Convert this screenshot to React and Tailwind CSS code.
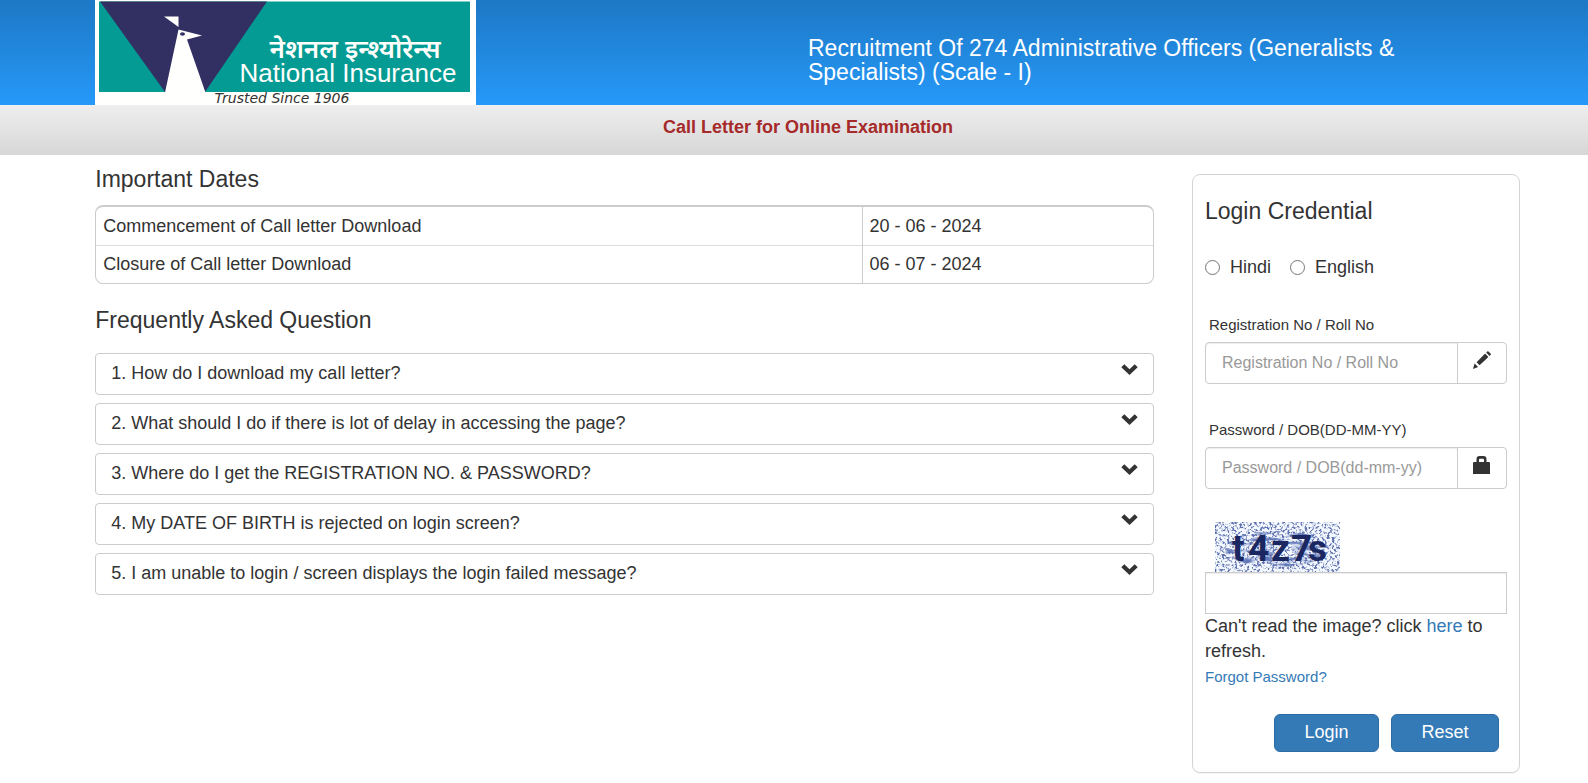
import { useState } from 'react';

const dates = [
    { label: 'Commencement of Call letter Download', value: '20 - 06 - 2024' },
    { label: 'Closure of Call letter Download', value: '06 - 07 - 2024' },
];

const questions = [
    '1. How do I download my call letter?',
    '2. What should I do if there is lot of delay in accessing the page?',
    '3. Where do I get the REGISTRATION NO. & PASSWORD?',
    '4. My DATE OF BIRTH is rejected on login screen?',
    '5. I am unable to login / screen displays the login failed message?',
];

const Logo = () => (
    <svg className="block w-full" viewBox="0 0 381 105" role="img" aria-label="National Insurance">
        <rect width="381" height="105" fill="#fffffd" />
        <rect x="4" y="1.5" width="371" height="90.5" fill="#039b93" />
        <path d="M5 1.5H172L110 92H70Z" fill="#322f63" />
        {/* Bird */}
        <path d="M70 92.5L83.5 29.5L107 35.5L92 39.5L110.500 92.500Z" fill="#fffffd" />
        <path d="M69 16.500H83.500V27Z" fill="#fffffd" />
        <ellipse cx="87.500" cy="34" rx="2.500" ry="1.800" fill="#322f63" />
        <g fontFamily="'Liberation Sans', 'Noto Sans Devanagari', sans-serif" fill="#fffffd">
            <text x="260" y="58" fontSize="26" fontWeight="600" textAnchor="middle">नेशनल इन्श्योरेन्स</text>
            <text x="253" y="82" fontSize="26" textAnchor="middle">National Insurance</text>
        </g>
        <text x="187" y="103" fontSize="14" fontStyle="italic" fontFamily="'DejaVu Sans', sans-serif" fill="#333333" textAnchor="middle">
            Trusted Since 1906
        </text>
    </svg>
);

const ChevronIcon = () => (
    <svg className="h-[11px] w-[17px]" viewBox="0 0 17 11" fill="currentColor" aria-hidden="true">
        <path d="M0.300 3.200L3.300 0.300L8.500 5.200L13.700 0.300L16.700 3.200L8.500 11Z" />
    </svg>
);

const PencilIcon = () => (
    <svg className="h-[18px] w-[18px]" viewBox="0 0 18 18" fill="currentColor" aria-hidden="true">
        <path d="M14.200 0.500Q14.900 0 15.500 0.600L17.500 2.600Q18.200 3.300 17.600 3.900L16.500 4.900L13.200 1.600ZM12.100 2.600L15.400 5.900L6.600 14.300L3.600 11.200ZM1.600 12.500L5.100 15.900L0 18Z" />
    </svg>
);

const LockIcon = () => (
    <svg className="h-[18px] w-[18px]" viewBox="0 0 18 18" fill="currentColor" aria-hidden="true">
        <path fillRule="evenodd" d="M3.500 6V3Q3.500 0 6.500 0H10.500Q13.500 0 13.500 3V6H16Q17 6 17 7V18H0V7Q0 6 1 6ZM6 6H11V3.700Q11 2.700 10 2.700H7Q6 2.700 6 3.700Z" />
    </svg>
);

const Captcha = () => (
    <svg className="ml-[10px] block h-[50px] w-[125px]" viewBox="0 0 125 50" role="img" aria-label="Captcha">
        <defs>
            <filter id="speckle" x="0" y="0" width="100%" height="100%" colorInterpolationFilters="sRGB">
                <feTurbulence type="fractalNoise" baseFrequency="0.4" numOctaves="2" seed="7" />
                <feColorMatrix values="0 0 0 0 0.36  0 0 0 0 0.43  0 0 0 0 0.68  5 0 0 0 -2.400" />
            </filter>
            <filter id="smear" x="0" y="0" width="100%" height="100%" colorInterpolationFilters="sRGB">
                <feTurbulence type="fractalNoise" baseFrequency="0.05 0.25" numOctaves="3" seed="4" result="noise" />
                <feColorMatrix in="noise" values="0 0 0 0 0.38  0 0 0 0 0.47  0 0 0 0 0.72  3 0 0 0 -1.300" />
                <feComposite in2="SourceGraphic" operator="in" />
            </filter>
        </defs>
        <rect width="125" height="50" fill="#f4f9ff" />
        <rect width="125" height="50" filter="url(#speckle)" />
        <ellipse cx="62" cy="27" rx="52" ry="18" filter="url(#smear)" />
        <text x="17 33 56 76 93" y="39" fontSize="37" fontWeight="700" fontFamily="Roboto, sans-serif" fill="#1b2760">
            t4z7s
        </text>
    </svg>
);

const Field = ({ id, label, placeholder, type, icon }) => (
    <div>
        <label htmlFor={id} className="ml-1 block text-[15px] leading-[21px]">{label}</label>
        <div className="mt-[7px] flex h-[42px] rounded border border-[#cccccc]">
            <input
                id={id}
                type={type}
                placeholder={placeholder}
                className="min-w-0 flex-1 rounded-l px-4 text-[16px] shadow-[inset_0_1px_1px_rgba(0,0,0,0.075)] outline-none placeholder:text-[#999999]"
            />
            <span className="flex w-[49px] justify-center border-l border-[#cccccc] pt-2">{icon}</span>
        </div>
    </div>
);

const LoginCard = () => (
    <form
        onSubmit={(e) => e.preventDefault()}
        className="mt-[19px] rounded-lg border border-[#d3d3d3] px-3 pt-[22px] pb-5 shadow-[0_1px_1px_rgba(0,0,0,0.05)]"
    >
        <h2 className="text-[23px] leading-[28px]">Login Credential</h2>

        <div className="mt-7 flex items-center gap-[19px] text-[18px] leading-[28px]">
            <label className="flex items-center gap-[10px]">
                <input type="radio" name="language" className="h-[15px] w-[15px]" />
                Hindi
            </label>
            <label className="flex items-center gap-[10px]">
                <input type="radio" name="language" className="h-[15px] w-[15px]" />
                English
            </label>
        </div>

        <div className="mt-[33px] flex flex-col gap-[35px]">
            <Field id="regno" type="text" label="Registration No / Roll No" placeholder="Registration No / Roll No" icon={<PencilIcon />} />
            <Field id="password" type="password" label="Password / DOB(DD-MM-YY)" placeholder="Password / DOB(dd-mm-yy)" icon={<LockIcon />} />
        </div>

        <div className="mt-[33px]">
            <Captcha />
            <input
                type="text"
                aria-label="Captcha text"
                className="block h-[42px] w-full border border-[#cccccc] px-4 text-[16px] shadow-[inset_0_1px_1px_rgba(0,0,0,0.075)] outline-none"
            />
        </div>
        <p className="text-[18px] leading-[25px]">
            Can't read the image? click <a href="#refresh" className="text-[#337ab7]">here</a> to refresh.
        </p>
        <a href="#forgot" className="block text-[15px] leading-[25px] text-[#337ab7]">Forgot Password?</a>

        <div className="mt-[25px] flex justify-end gap-3 pr-2 text-[18px] text-white">
            <button type="submit" className="h-[38px] w-[105px] rounded-md border border-[#2e6da4] bg-[#337ab7] pb-[2px]">Login</button>
            <button type="reset" className="h-[38px] w-[108px] rounded-md border border-[#2e6da4] bg-[#337ab7] pb-[2px]">Reset</button>
        </div>
    </form>
);

const Faq = () => {
    const [open, setOpen] = useState(null);

    return (
        <div className="mt-[19px] flex flex-col gap-2">
            {questions.map((question, i) => (
                <button
                    key={question}
                    type="button"
                    aria-expanded={open === i}
                    onClick={() => setOpen(open === i ? null : i)}
                    className="flex h-[42px] w-full items-start justify-between rounded border border-[#cccccc] px-[15px] text-left text-[18px] leading-[38px]"
                >
                    {question}
                    <span className="pt-[10px] leading-none"><ChevronIcon /></span>
                </button>
            ))}
        </div>
    );
};

const App = () => {
    return (
        <div className="min-h-screen bg-white font-['Liberation_Sans',Arial,sans-serif] text-[#333333]">
            <header className="flex bg-linear-to-b from-[#1d78c5] to-[#2699f9] px-[6%]">
                <div className="w-[381px] shrink-0">
                    <Logo />
                </div>
                <h1 className="ml-auto w-[49%] pt-9 text-[23px] leading-[24px] text-white">
                    <span className="block max-w-[600px]">Recruitment Of 274 Administrative Officers (Generalists &amp; Specialists) (Scale - I)</span>
                </h1>
            </header>

            <div className="h-[50px] bg-linear-to-b from-[#eeeeee] to-[#d7d7d7] pt-[10px] text-center">
                <h2 className="pl-7 text-[18px] leading-[24px] font-bold text-[#a52a2a]">Call Letter for Online Examination</h2>
            </div>

            <main className="flex items-start gap-[38px] pr-[68px] pb-[10px] pl-[6%]">
                <section className="min-w-0 flex-1">
                    <h2 className="mt-[10px] text-[23px] leading-[28px]">Important Dates</h2>
                    <div className="mt-3 overflow-hidden rounded-lg border border-t-2 border-[#cccccc]">
                        <table className="w-full border-collapse text-[18px] leading-[22px]">
                            <tbody>
                                {dates.map((row) => (
                                    <tr key={row.label} className="h-[38px] border-b border-[#dddddd] last:border-b-0">
                                        <th scope="row" className="px-[7px] text-left font-normal">{row.label}</th>
                                        <td className="w-[291px] border-l border-[#cccccc] px-[7px]">{row.value}</td>
                                    </tr>
                                ))}
                            </tbody>
                        </table>
                    </div>

                    <h2 className="mt-[22px] text-[23px] leading-[28px]">Frequently Asked Question</h2>
                    <Faq />
                </section>

                <aside className="w-[328px] shrink-0">
                    <LoginCard />
                </aside>
            </main>
        </div>
    );
};

export default App;
